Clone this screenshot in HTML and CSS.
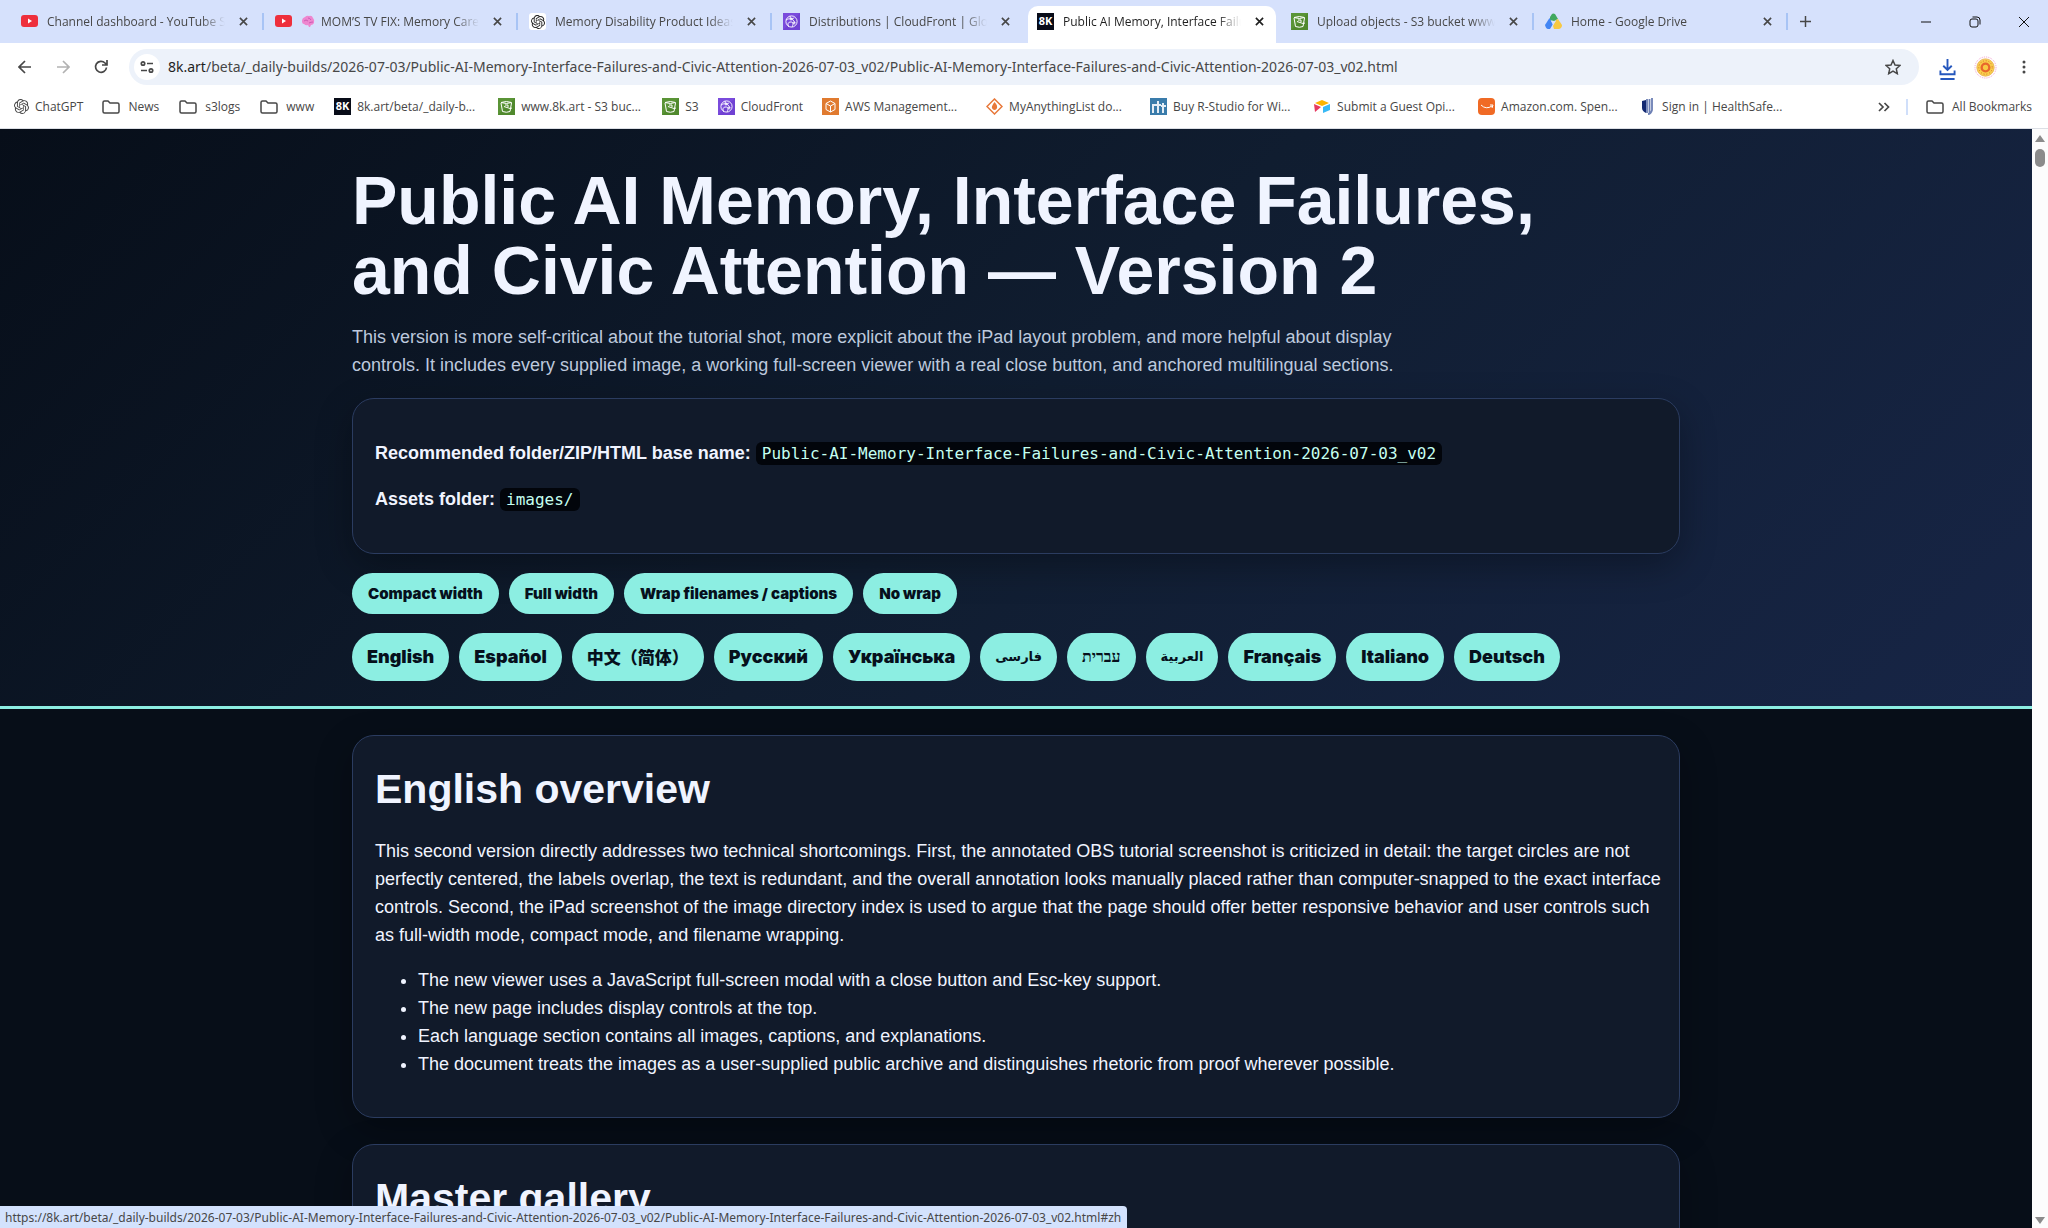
FILE: index.html
```
<!DOCTYPE html>
<html lang="en">
<head>
    <meta charset="UTF-8">
    <meta name="viewport" content="width=device-width, initial-scale=1.0">
    <title>Public AI Memory, Interface Failures, and Civic Attention</title>
    <link rel="stylesheet" href="styles.css">
</head>
<body>
    <!-- Shared icons -->
    <svg class="symbols" aria-hidden="true">
        <symbol id="i-close" viewBox="0 0 10 10"><path d="M1 1l8 8M9 1l-8 8" fill="none" stroke="currentColor" stroke-width="1.8"/></symbol>
        <symbol id="i-youtube" viewBox="0 0 17 17"><rect y="2" width="17" height="12" rx="3" fill="#ee2f3c"/><path d="M7 5.6v4.8L11 8z" fill="#fff"/></symbol>
        <symbol id="i-openai" viewBox="0 0 24 24"><path fill="currentColor" d="M22.2819 9.8211a5.9847 5.9847 0 0 0-.5157-4.9108 6.0462 6.0462 0 0 0-6.5098-2.9A6.0651 6.0651 0 0 0 4.9807 4.1818a5.9847 5.9847 0 0 0-3.9977 2.9 6.0462 6.0462 0 0 0 .7427 7.0966 5.98 5.98 0 0 0 .511 4.9107 6.051 6.051 0 0 0 6.5146 2.9001A5.9847 5.9847 0 0 0 13.2599 24a6.0557 6.0557 0 0 0 5.7718-4.2058 5.9894 5.9894 0 0 0 3.9977-2.9001 6.0557 6.0557 0 0 0-.7475-7.0729zm-9.022 12.6081a4.4755 4.4755 0 0 1-2.8764-1.0408l.1419-.0804 4.7783-2.7582a.7948.7948 0 0 0 .3927-.6813v-6.7369l2.02 1.1686a.071.071 0 0 1 .038.052v5.5826a4.504 4.504 0 0 1-4.4945 4.4944zm-9.6607-4.1254a4.4708 4.4708 0 0 1-.5346-3.0137l.142.0852 4.783 2.7582a.7712.7712 0 0 0 .7806 0l5.8428-3.3685v2.3324a.0804.0804 0 0 1-.0332.0615L9.74 19.9502a4.4992 4.4992 0 0 1-6.1408-1.6464zM2.3408 7.8956a4.485 4.485 0 0 1 2.3655-1.9728V11.6a.7664.7664 0 0 0 .3879.6765l5.8144 3.3543-2.0201 1.1685a.0757.0757 0 0 1-.071 0l-4.8303-2.7865A4.504 4.504 0 0 1 2.3408 7.872zm16.5963 3.8558L13.1038 8.364 15.1192 7.2a.0757.0757 0 0 1 .071 0l4.8303 2.7913a4.4944 4.4944 0 0 1-.6765 8.1042v-5.6772a.79.79 0 0 0-.407-.667zm2.0107-3.0231l-.142-.0852-4.7735-2.7818a.7759.7759 0 0 0-.7854 0L9.409 9.2297V6.8974a.0662.0662 0 0 1 .0284-.0615l4.8303-2.7866a4.4992 4.4992 0 0 1 6.6802 4.66zM8.3065 12.863l-2.02-1.1638a.0804.0804 0 0 1-.038-.0567V6.0742a4.4992 4.4992 0 0 1 7.3757-3.4537l-.142.0805L8.704 5.459a.7948.7948 0 0 0-.3927.6813zm1.0976-2.3654l2.602-1.4998 2.6069 1.4998v2.9994l-2.5974 1.4997-2.6067-1.4997Z"/></symbol>
        <symbol id="i-cloudfront" viewBox="0 0 17 17"><rect width="17" height="17" fill="#7a4bdc"/><path d="M0 17L17 0v17z" fill="#6638c9" opacity=".5"/><g fill="none" stroke="#fff" stroke-width=".9"><circle cx="8.500" cy="8.500" r="5.600"/><path d="M3 7c3-2 7-2 9 3M7 3c0 3 2 3 4 2M6 14c-2-3-1-5 2-5s2 3 1 5"/><circle cx="8" cy="6" r="1"/><circle cx="11" cy="10" r="1"/></g></symbol>
        <symbol id="i-s3" viewBox="0 0 17 17"><rect width="17" height="17" fill="#5a9436"/><path d="M0 17L17 0v17z" fill="#457d24" opacity=".5"/><g fill="none" stroke="#fff" stroke-width="1"><path d="M3 5l1.500 8.500q4 1.500 7.500 0L13.500 5M6 8.500l6 2 2-.5"/><path d="M3 4.500q5.500-2 10.500 0-5 2-10.500 0zM7 7h3v2"/></g></symbol>
        <symbol id="i-8k" viewBox="0 0 17 17"><rect width="17" height="17" fill="#080c18"/><text x="8.500" y="12" text-anchor="middle" class="logo-text">8K</text></symbol>
        <symbol id="i-folder" viewBox="0 0 18 14"><path d="M1 2.500Q1 1 2.500 1H6l2 2h7.500Q17 3 17 4.500v7q0 1.500-1.500 1.500h-13Q1 13 1 11.500z" fill="none" stroke="currentColor" stroke-width="1.500"/></symbol>
    </svg>

    <div class="tab-strip">
        <div class="tab">
            <svg class="favicon"><use href="#i-youtube"/></svg>
            <span class="tab-title">Channel dashboard - YouTube Studio</span>
            <button class="tab-close" aria-label="Close tab"><svg><use href="#i-close"/></svg></button>
        </div>
        <div class="tab">
            <svg class="favicon"><use href="#i-youtube"/></svg>
            <svg class="brain" viewBox="0 0 14 13"><path d="M1 6Q1 3 4 2q2-2 4-1 3-1 4 2 2 2 1 5-1 2-3 2l-1 2H8L7 10Q5 11 3 9 1 9 1 6z" fill="#ee86cf"/><path d="M3 6q2-2 4 0M7 3q2 0 3 2M8 8q2-1 4-1" fill="none" stroke="#cc5cb4"/></svg>
            <span class="tab-title">MOM’S TV FIX: Memory Care Remote</span>
            <button class="tab-close" aria-label="Close tab"><svg><use href="#i-close"/></svg></button>
        </div>
        <div class="tab">
            <span class="favicon favicon-white"><svg><use href="#i-openai"/></svg></span>
            <span class="tab-title">Memory Disability Product Ideas</span>
            <button class="tab-close" aria-label="Close tab"><svg><use href="#i-close"/></svg></button>
        </div>
        <div class="tab tab-before">
            <svg class="favicon"><use href="#i-cloudfront"/></svg>
            <span class="tab-title">Distributions | CloudFront | Global</span>
            <button class="tab-close" aria-label="Close tab"><svg><use href="#i-close"/></svg></button>
        </div>
        <div class="tab tab-active">
            <svg class="favicon"><use href="#i-8k"/></svg>
            <span class="tab-title">Public AI Memory, Interface Failures</span>
            <button class="tab-close" aria-label="Close tab"><svg><use href="#i-close"/></svg></button>
        </div>
        <div class="tab">
            <svg class="favicon"><use href="#i-s3"/></svg>
            <span class="tab-title">Upload objects - S3 bucket www.8k.art</span>
            <button class="tab-close" aria-label="Close tab"><svg><use href="#i-close"/></svg></button>
        </div>
        <div class="tab">
            <svg class="favicon" viewBox="0 0 17 17"><path d="M5 4l2-3q1-1 3 0l3 5-4 2-4-1z" fill="#41a85f"/><path d="M4.500 5L8 11l-3 5H3q-2 0-3-4z" fill="#4285f4"/><path d="M13 6l4 6q0 3-3 4H9l-1-3 3-6z" fill="#f7c842"/><path d="M6 8h5l-3 4z" fill="#d6e1fb"/></svg>
            <span class="tab-title">Home - Google Drive</span>
            <button class="tab-close" aria-label="Close tab"><svg><use href="#i-close"/></svg></button>
        </div>
        <button class="new-tab" aria-label="New tab"><svg viewBox="0 0 12 12"><path d="M6 0v12M0 6h12" stroke="currentColor" stroke-width="1.600"/></svg></button>
        <div class="window-buttons">
            <button aria-label="Minimize"><svg viewBox="0 0 12 12"><path d="M1 6h10"/></svg></button>
            <button aria-label="Restore"><svg viewBox="0 0 12 12"><rect x="1" y="3" width="8" height="8" rx="2"/><path d="M3.500 1H8q3 0 3 3v4.500"/></svg></button>
            <button aria-label="Close"><svg viewBox="0 0 12 12"><path d="M1 1l10 10M11 1L1 11"/></svg></button>
        </div>
    </div>

    <div class="toolbar">
        <button class="nav-button" aria-label="Back"><svg viewBox="0 0 14 14"><path d="M13 7H1M7 1L1 7l6 6"/></svg></button>
        <button class="nav-button" aria-label="Forward" disabled><svg viewBox="0 0 14 14"><path d="M1 7h12M7 1l6 6-6 6"/></svg></button>
        <button class="nav-button" aria-label="Reload"><svg viewBox="0 0 14 14"><path d="M12.500 7.500A5.500 5.500 0 1 1 11 3l2 2M13 0v5H8"/></svg></button>
        <div class="address-bar">
            <button class="site-info" aria-label="Site information"><svg viewBox="0 0 14 14"><circle cx="3" cy="3.500" r="1.700"/><path d="M7 3.500h6M1 10.500h6"/><circle cx="11" cy="10.500" r="1.700"/></svg></button>
            <div class="url"><span class="url-host">8k.art</span>/beta/_daily-builds/2026-07-03/Public-AI-Memory-Interface-Failures-and-Civic-Attention-2026-07-03_v02/Public-AI-Memory-Interface-Failures-and-Civic-Attention-2026-07-03_v02.html</div>
            <button class="star" aria-label="Bookmark this page"><svg viewBox="0 0 16 16"><path d="M8 1.500l2 4.500 5 .5-3.700 3.300 1 4.900L8 12.200l-4.300 2.500 1-4.900L1 6.500 6 6z"/></svg></button>
        </div>
        <button class="download" aria-label="Downloads"><svg viewBox="0 0 18 24"><path d="M9 1v11M4.500 8L9 12.500 13.500 8M1.500 13v4h15v-4M1.500 22h15"/></svg></button>
        <button class="avatar" aria-label="Profile"><svg viewBox="0 0 24 24"><circle cx="12" cy="12" r="11" fill="#fff" stroke="#ef9ccc" stroke-dasharray="1 1"/><circle cx="12" cy="12" r="9" fill="#f8cf4b" stroke="#e9b252"/><circle cx="12" cy="12" r="7" fill="none" stroke="#d9632d" stroke-dasharray="1 2"/><circle cx="12" cy="12" r="4" fill="#f8c944" stroke="#e8672d" stroke-width="2.500"/></svg></button>
        <button class="menu" aria-label="Menu"><svg viewBox="0 0 4 14"><circle cx="2" cy="2" r="1.500"/><circle cx="2" cy="7" r="1.500"/><circle cx="2" cy="12" r="1.500"/></svg></button>
    </div>

    <nav class="bookmarks" aria-label="Bookmarks">
        <a href="#" class="bookmark"><svg class="bookmark-icon bookmark-gpt"><use href="#i-openai"/></svg><span>ChatGPT</span></a>
        <a href="#" class="bookmark bookmark-folder"><svg class="folder"><use href="#i-folder"/></svg><span>News</span></a>
        <a href="#" class="bookmark bookmark-folder"><svg class="folder"><use href="#i-folder"/></svg><span>s3logs</span></a>
        <a href="#" class="bookmark bookmark-folder"><svg class="folder"><use href="#i-folder"/></svg><span>www</span></a>
        <a href="#" class="bookmark bookmark-long"><svg class="bookmark-icon"><use href="#i-8k"/></svg><span>8k.art/beta/_daily-b...</span></a>
        <a href="#" class="bookmark bookmark-long"><svg class="bookmark-icon"><use href="#i-s3"/></svg><span>www.8k.art - S3 buc...</span></a>
        <a href="#" class="bookmark"><svg class="bookmark-icon"><use href="#i-s3"/></svg><span>S3</span></a>
        <a href="#" class="bookmark"><svg class="bookmark-icon"><use href="#i-cloudfront"/></svg><span>CloudFront</span></a>
        <a href="#" class="bookmark bookmark-long"><svg class="bookmark-icon" viewBox="0 0 17 17"><rect width="17" height="17" fill="#e07a2f"/><path d="M8.500 3L13 5.500v6L8.500 14 4 11.500v-6zM4 5.500L8.500 8 13 5.500M8.500 8v6" fill="none" stroke="#fff"/></svg><span>AWS Management...</span></a>
        <a href="#" class="bookmark bookmark-long"><svg class="bookmark-icon" viewBox="0 0 17 17"><path d="M8.500 1L16 8.500 8.500 16 1 8.500z" fill="#fff" stroke="#e8783a" stroke-width="1.500"/><path d="M8.500 4q4 4 2 7-2 2-4 0-2-2 2-7z" fill="#e8783a"/></svg><span>MyAnythingList do...</span></a>
        <a href="#" class="bookmark bookmark-long"><svg class="bookmark-icon" viewBox="0 0 17 17"><rect width="17" height="17" fill="#3a7cab"/><path d="M3 15V7h3M8 15V3M6 7h5M13 15V5M11 8h5" fill="none" stroke="#e4edf5" stroke-width="2"/></svg><span>Buy R-Studio for Wi...</span></a>
        <a href="#" class="bookmark bookmark-long"><svg class="bookmark-icon" viewBox="0 0 17 17"><path d="M1 5l7-3 7 3-7 3z" fill="#fcb400"/><path d="M9 9l7-3v6l-7 3z" fill="#38b9f5"/><path d="M0 6l7 3-6 5z" fill="#e63960"/></svg><span>Submit a Guest Opi...</span></a>
        <a href="#" class="bookmark bookmark-long"><svg class="bookmark-icon" viewBox="0 0 17 17"><rect width="17" height="17" rx="4" fill="#f06a25"/><path d="M3 7q5 5 11 1M12 7l3 0-1 3" fill="none" stroke="#fff"/></svg><span>Amazon.com. Spen...</span></a>
        <a href="#" class="bookmark"><svg class="bookmark-icon bookmark-narrow" viewBox="0 0 11 17"><path d="M0 3l4-1v13Q0 13 0 10z" fill="#142a72"/><path d="M5 1v14M7.500 1v15M10 0v12q-1 4-4 4" fill="none" stroke="#6c7fb4" stroke-width="1.800"/></svg><span>Sign in | HealthSafe...</span></a>
        <button class="more" aria-label="More bookmarks"><svg viewBox="0 0 12 10"><path d="M1 1l4 4-4 4M6.500 1l4 4-4 4"/></svg></button>
        <a href="#" class="bookmark all-bookmarks"><svg class="folder"><use href="#i-folder"/></svg><span>All Bookmarks</span></a>
    </nav>

    <div class="viewport">
        <div class="page">
            <header class="page-header">
                <div class="wrap">
                    <h1>Public AI Memory, Interface Failures, and Civic Attention — Version 2</h1>
                    <p class="intro">This version is more self-critical about the tutorial shot, more explicit about the iPad layout problem, and more helpful about display controls. It includes every supplied image, a working full-screen viewer with a real close button, and anchored multilingual sections.</p>
                    <div class="card">
                        <p><strong>Recommended folder/ZIP/HTML base name:</strong> <code>Public-AI-Memory-Interface-Failures-and-Civic-Attention-2026-07-03_v02</code></p>
                        <p><strong>Assets folder:</strong> <code>images/</code></p>
                    </div>
                    <div class="controls">
                        <button class="pill pill-button">Compact width</button>
                        <button class="pill pill-button">Full width</button>
                        <button class="pill pill-button">Wrap filenames / captions</button>
                        <button class="pill pill-button">No wrap</button>
                    </div>
                    <nav class="languages" aria-label="Languages">
                        <a class="pill" href="#en">English</a>
                        <a class="pill" href="#es">Español</a>
                        <a class="pill pill-chinese" href="#zh" lang="zh">中文（简体）</a>
                        <a class="pill" href="#ru" lang="ru">Русский</a>
                        <a class="pill" href="#uk" lang="uk">Українська</a>
                        <a class="pill pill-arabic" href="#fa" lang="fa">فارسی</a>
                        <a class="pill pill-hebrew" href="#he" lang="he">עברית</a>
                        <a class="pill pill-arabic" href="#ar" lang="ar">العربية</a>
                        <a class="pill" href="#fr">Français</a>
                        <a class="pill" href="#it">Italiano</a>
                        <a class="pill" href="#de">Deutsch</a>
                    </nav>
                </div>
            </header>
            <main class="wrap">
                <section class="card" id="en">
                    <h2>English overview</h2>
                    <p>This second version directly addresses two technical shortcomings. First, the annotated OBS tutorial screenshot is criticized in detail: the target circles are not perfectly centered, the labels overlap, the text is redundant, and the overall annotation looks manually placed rather than computer-snapped to the exact interface controls. Second, the iPad screenshot of the image directory index is used to argue that the page should offer better responsive behavior and user controls such as full-width mode, compact mode, and filename wrapping.</p>
                    <ul>
                        <li>The new viewer uses a JavaScript full-screen modal with a close button and Esc-key support.</li>
                        <li>The new page includes display controls at the top.</li>
                        <li>Each language section contains all images, captions, and explanations.</li>
                        <li>The document treats the images as a user-supplied public archive and distinguishes rhetoric from proof wherever possible.</li>
                    </ul>
                </section>
                <section class="card">
                    <h2>Master gallery</h2>
                </section>
            </main>
        </div>
        <div class="scrollbar" aria-hidden="true">
            <svg viewBox="0 0 10 8"><path d="M5 0l5 7H0z"/></svg>
            <div class="scroll-thumb"></div>
            <svg class="scroll-down" viewBox="0 0 10 8"><path d="M5 8l5-7H0z"/></svg>
        </div>
        <div class="status">https://8k.art/beta/_daily-builds/2026-07-03/Public-AI-Memory-Interface-Failures-and-Civic-Attention-2026-07-03_v02/Public-AI-Memory-Interface-Failures-and-Civic-Attention-2026-07-03_v02.html#zh</div>
    </div>
</body>
</html>
```
FILE: styles.css
```
* {
    box-sizing: border-box;
}

body {
    display: flex;
    flex-direction: column;
    height: 100vh;
    margin: 0;
    overflow: hidden;
    background: #fff;
    color: #474747;
    font: 12px/16px "Open Sans", "Segoe UI", sans-serif;
}

button {
    padding: 0;
    border: 0;
    background: none;
    color: inherit;
    font: inherit;
    cursor: pointer;
}

svg {
    display: block;
    flex: none;
}

.symbols {
    position: absolute;
    width: 0;
    height: 0;
}

.logo-text {
    fill: #fff;
    font: bold 11px "Open Sans", sans-serif;
}

/* Browser tabs */
.tab-strip {
    display: flex;
    flex: none;
    height: 43px;
    padding: 6px 0 0 10px;
    background: #d6e1fc;
}

.tab {
    position: relative;
    display: flex;
    align-items: center;
    flex: 0 1 254px;
    min-width: 0;
    height: 37px;
    padding: 0 16px 6px 11px;
}

.tab::after {
    content: "";
    position: absolute;
    top: 7px;
    right: 0;
    width: 2px;
    height: 17px;
    background: #a8c4f5;
}

.tab-before::after,
.tab-active::after {
    display: none;
}

.tab-active {
    color: #1f1f1f;
}

.tab-active::before {
    content: "";
    position: absolute;
    z-index: 0;
    inset: 0 4px 0 2px;
    border-radius: 10px 10px 0 0;
    background: #fff;
}

.tab > * {
    z-index: 1;
}

.favicon {
    width: 17px;
    height: 17px;
    flex: none;
    margin-right: 9px;
}

.favicon-white {
    display: grid;
    place-items: center;
    border-radius: 3px;
    background: #fff;
    color: #222;
}

.favicon-white svg {
    width: 14px;
    height: 14px;
}

.brain {
    width: 14px;
    height: 13px;
    margin-right: 6px;
}

.tab-title {
    flex: 1;
    overflow: hidden;
    white-space: nowrap;
    mask-image: linear-gradient(to left, transparent, #000 24px);
}

.tab-close {
    margin-left: 14px;
}

.tab-close svg {
    width: 9px;
    height: 9px;
}

.new-tab {
    height: 31px;
    margin-left: 12px;
}

.new-tab svg {
    width: 11px;
    height: 11px;
}

.window-buttons {
    display: flex;
    gap: 37px;
    height: 31px;
    margin-left: auto;
    padding-right: 18px;
    color: #111;
}

.window-buttons svg {
    width: 12px;
    height: 12px;
    fill: none;
    stroke: currentColor;
}

/* Address row */
.toolbar {
    display: flex;
    align-items: center;
    flex: none;
    height: 48px;
    padding: 0 22px 0 18px;
}

.nav-button {
    margin-right: 24px;
}

.nav-button:disabled {
    color: #b2b2b2;
}

.nav-button svg,
.site-info svg {
    width: 14px;
    height: 14px;
    fill: none;
    stroke: currentColor;
    stroke-width: 1.7;
}

.address-bar {
    display: flex;
    align-items: center;
    flex: 1;
    min-width: 0;
    height: 36px;
    margin-left: -3px;
    padding: 0 18px 0 5px;
    border-radius: 18px;
    background: #edf2fa;
}

.site-info {
    display: grid;
    place-items: center;
    width: 26px;
    height: 26px;
    margin-right: 8px;
    border-radius: 50%;
    background: #fff;
}

.url {
    flex: 1;
    overflow: hidden;
    white-space: nowrap;
    font-family: "Noto Sans", sans-serif;
    font-size: 14px;
    line-height: 20px;
}

.url-host {
    color: #1f1f1f;
}

.star svg {
    width: 16px;
    height: 16px;
    fill: none;
    stroke: currentColor;
    stroke-width: 1.5;
}

.download {
    margin-left: 20px;
    color: #2557bd;
}

.download svg {
    width: 17px;
    height: 23px;
    margin-top: 4px;
    fill: none;
    stroke: currentColor;
    stroke-width: 2;
}

.avatar {
    margin: 0 25px 0 18px;
}

.avatar svg {
    width: 23px;
    height: 23px;
}

.menu svg {
    width: 4px;
    height: 14px;
    fill: currentColor;
}

/* Bookmarks row */
.bookmarks {
    display: flex;
    align-items: center;
    flex: none;
    height: 38px;
    padding: 0 16px 6px 14px;
    border-bottom: 1px solid #dcdfe5;
}

.bookmark {
    display: flex;
    align-items: center;
    gap: 6px;
    margin-right: 19px;
    color: inherit;
    text-decoration: none;
    white-space: nowrap;
}

.bookmark-folder {
    gap: 8px;
    margin-right: 20px;
}

.bookmark-long {
    width: 147px;
    margin-right: 17px;
}

.bookmark-icon {
    width: 17px;
    height: 17px;
}

.bookmark-gpt {
    width: 15px;
    height: 15px;
}

.bookmark-narrow {
    width: 11px;
    margin-right: 3px;
}

.folder {
    width: 18px;
    height: 14px;
}

.more {
    margin-left: auto;
    margin-right: 16px;
}

.more svg {
    width: 12px;
    height: 10px;
    fill: none;
    stroke: currentColor;
    stroke-width: 1.7;
}

.all-bookmarks {
    gap: 8px;
    margin-right: 0;
    padding-left: 18px;
    border-left: 2px solid #d0dffa;
}

/* Page */
.viewport {
    position: relative;
    display: flex;
    flex: 1;
    min-height: 0;
}

.page {
    flex: 1;
    min-width: 0;
    overflow: hidden;
    background: #070e18;
    color: #f0f4ff;
    font: 18px/28px Arial, "Liberation Sans", "Noto Sans CJK SC", sans-serif;
}

.page-header {
    padding: 36px 0 25px;
    border-bottom: 3px solid #8ceee2;
    background: linear-gradient(135deg, #070e19, #101d30 50%, #172546);
}

.wrap {
    width: 92%;
    max-width: 1328px;
    margin: 0 auto;
}

h1 {
    max-width: 1232px;
    margin: 0 0 18px;
    font-size: 68px;
    line-height: 70px;
}

.intro {
    max-width: 1056px;
    margin: 0 0 19px;
    color: #bdc9dd;
}

.card {
    padding: 22px 14px 22px 22px;
    border: 1px solid #2b3c60;
    border-radius: 22px;
    background: #111a2a;
    box-shadow: 0 12px 36px rgba(0, 0, 0, 0.3);
}

.card p,
.card ul {
    margin: 17px 0;
}

.page-header .card p {
    margin: 18px 0;
}

.card ul {
    padding-left: 43px;
}

code {
    padding: 2px 6px;
    border-radius: 6px;
    background: #02050b;
    color: #c5fff0;
    font: 16px/21px "DejaVu Sans Mono", monospace;
}

.controls,
.languages {
    display: flex;
    flex-wrap: wrap;
    gap: 10px;
    margin-top: 19px;
}

.pill {
    padding: 10px 15px;
    border-radius: 24px;
    background: #8ceee2;
    color: #06101c;
    font-family: Inter, sans-serif;
    font-weight: 900;
    font-size: 18px;
    text-decoration: none;
}

.pill-button {
    padding: 10px 16px;
    font-size: 15px;
    line-height: 21px;
}

.pill-chinese {
    font-family: "Noto Sans CJK SC", sans-serif;
    font-size: 17px;
}

.pill-arabic {
    font-family: "DejaVu Sans", sans-serif;
    font-size: 13px;
    font-weight: bold;
}

.pill-hebrew {
    font-family: "Liberation Serif", serif;
    font-size: 16px;
    font-weight: bold;
}

main .card {
    margin: 26px 0;
}

h2 {
    margin: 0;
    font-size: 41px;
    line-height: 62px;
}

.scrollbar {
    display: flex;
    flex-direction: column;
    align-items: center;
    gap: 6px;
    width: 16px;
    padding: 6px 0 4px;
    background: #fcfcfc;
    fill: #8b8b8b;
}

.scrollbar svg {
    width: 10px;
    height: 8px;
}

.scroll-thumb {
    width: 10px;
    height: 18px;
    border-radius: 5px;
    background: #8b8b8b;
}

.scroll-down {
    margin-top: auto;
}

.status {
    position: absolute;
    left: 0;
    bottom: 0;
    height: 22px;
    padding: 4px 6px 2px 5px;
    border-radius: 0 4px 0 0;
    background: #d3e2fd;
    font-family: "Noto Sans", sans-serif;
    white-space: nowrap;
}
```
